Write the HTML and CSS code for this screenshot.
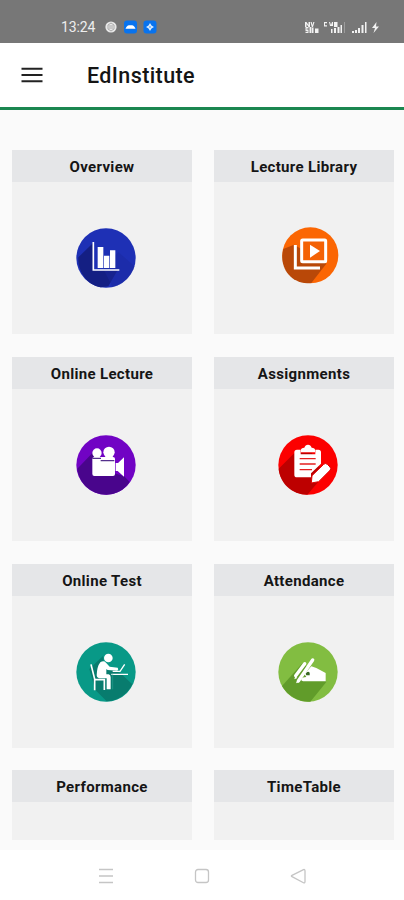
FILE: index.html
```html
<!DOCTYPE html>
<html lang="en">
<head>
<meta charset="utf-8">
<title>EdInstitute</title>
<link rel="stylesheet" href="styles.css">
</head>
<body>
<header class="status">
  <span class="time">13:24</span>
  <svg class="notices" width="54" height="14" viewBox="0 0 54 14">
    <circle cx="6" cy="7" r="5.6" fill="#e8e8e8"/>
    <path d="M3 5l3-2 3 2v4l-3 2-3-2zM4 6h4M4 8h4" fill="none" stroke="#999" stroke-width=".8"/>
    <rect x="19" y=".5" width="13" height="13" rx="3" fill="#0873ee"/>
    <path d="M20.5 8.800c1-2.400 2-3.600 3.500-3.600h3c1.500 0 2.500 1.200 3.500 3.600z" fill="#fff"/>
    <rect x="38.500" y=".5" width="13" height="13" rx="3" fill="#0873ee"/>
    <path d="M45 3l1.500 2.500L49 7l-2.500 1.500L45 11l-1.500-2.500L41 7l2.500-1.500z" fill="#d8ebff"/>
    <circle cx="45" cy="7" r=".7" fill="#0873ee"/>
  </svg>
  <svg class="signals" width="76" height="14" viewBox="0 0 76 14" fill="#f2f2f2">
    <path d="M1 2h1.500l2 3V2H6v5H4.500l-2-3v3H1zM6.500 2h1.200l.8 3 .8-3h1.200L9 7H7.800zM1.500 7h3v1.500h-2v1h2V13h-3v-1.200h2v-.8h-2zM5.500 7h2v6h-2zM8 7.500h1.500V13H8zM11 8.500h3.500V13H11z"/>
    <path d="M20 2h3v1.200h-2v2h2v1.200h-3zM25 2h1l1 3 1-3h1v4h-3zM30 2h3.500v5H30zM27 9h1.500v4H27zM30 8h2v5h-2zM33.500 7h2v6h-2zM36.500 5h1.500v8h-1.500z"/>
    <path d="M40 2h1v11h-1z" opacity=".3"/>
    <path d="M48 11h2v2h-2zM51 10h2v3h-2zM54 8h2v5h-2zM57.500 5h2v8h-2zM61 2h1.500v11H61z"/>
    <path d="M72.500 2L68 8h3l-1.500 5 5.500-6.500h-3z"/>
  </svg>
</header>
<div class="appbar">
  <svg width="22" height="16" viewBox="0 0 22 16"><path d="M.5 1.800h21M.5 8h21M.5 14.200h21" stroke="#222" stroke-width="2"/></svg>
  <h1>EdInstitute</h1>
</div>
<main class="grid">
  <section class="card">
    <h2>Overview</h2>
    <svg class="icon" viewBox="0 0 240 240">
      <circle cx="120" cy="120" r="89" fill="#1e30b5"/>
      <path d="M82 74L37 118C35 160 62 200 104 208l23-3 28-49L82 157z" fill="#141f83"/>
      <path d="M112 154l45-52 49 43c-12 33-35 55-66 63z" fill="#1a299e" opacity=".45"/>
      <path d="M82 72v84h78" fill="none" stroke="#fff" stroke-width="5"/>
      <path d="M95 87h17v63H95zM114 113h16v37h-16zM132 97h16v53h-16z" fill="#fff"/>
    </svg>
  </section>
  <section class="card">
    <h2>Lecture Library</h2>
    <svg class="icon" viewBox="0 0 240 240">
      <circle cx="127" cy="112" r="84" fill="#fb6603"/>
      <path d="M78 80L46 93c-13 45 12 99 72 103l12-1 45-58z" fill="#b94808"/>
      <rect x="101" y="66" width="72" height="65" fill="#f46205"/>
      <path d="M82 81v69h74" fill="none" stroke="#fff" stroke-width="9"/>
      <rect x="101" y="66" width="72" height="65" rx="3" fill="none" stroke="#fff" stroke-width="9"/>
      <path d="M126 80l30 19-30 20z" fill="#fff"/>
    </svg>
  </section>
  <section class="card">
    <h2>Online Lecture</h2>
    <svg class="icon" viewBox="0 0 240 240">
      <circle cx="120" cy="120" r="89" fill="#7103c4"/>
      <path d="M80 83l-46 48c4 43 42 78 88 78 28-1 53-14 69-38l-17-18-30-8z" fill="#49058c"/>
      <circle cx="93" cy="84" r="14" fill="#fff"/><circle cx="129" cy="82" r="17" fill="#fff"/>
      <rect x="79" y="96" width="68" height="57" rx="6" fill="#fff"/>
      <path d="M149 114h7l18-17v58l-19-17h-6z" fill="#fff"/>
      <path d="M79 100h26M104 107h41" stroke="#54308c" stroke-width="4"/>
    </svg>
  </section>
  <section class="card">
    <h2>Assignments</h2>
    <svg class="icon" viewBox="0 0 240 240">
      <circle cx="120" cy="120" r="89" fill="#fc0000"/>
      <path d="M80 83l-48 48c3 42 39 78 86 78l50-58-37-68z" fill="#bd0000"/>
      <path d="M87 74h11v14h44V74h9q8 0 8 8v34l-30 29v12H87q-8 0-8-8V82q0-8 8-8z" fill="#fff"/>
      <path d="M99 82v-8q0-5 10-6 3-9 11-9t11 9q10 1 10 6v8z" fill="#fff"/>
      <path d="M95 101h48M95 117h48M95 134h37" stroke="#e52020" stroke-width="4"/>
      <path d="M132 152l35-34q5-5 11 0l8 8q5 5 0 10l-34 34-22 4z" fill="#fff" stroke="#e00000" stroke-width="3"/>
    </svg>
  </section>
  <section class="card">
    <h2>Online Test</h2>
    <svg class="icon" viewBox="0 0 240 240">
      <circle cx="120" cy="120" r="89" fill="#089987"/>
      <path d="M111 72L70 111l18 63 34 34c31 0 63-21 77-51l-33-31-22-13-29 2z" fill="#087c6e"/>
      <circle cx="127" cy="78" r="13" fill="#fff"/>
      <path d="M103 91q10-7 17 1l11 12 24 3q4 5-1 9l-29-2-4-3v16h7q6 1 6 9v36h-12v-33H99q-7-1-7-9 1-27 11-39z" fill="#fff"/>
      <path d="M75 97l11 44v34M86 143h29v31" fill="none" stroke="#fff" stroke-width="5"/>
      <path d="M136 127h50M140 118h22l14-21" fill="none" stroke="#fff" stroke-width="4"/>
      <path d="M140 127v45" stroke="#29a192" stroke-width="2"/>
    </svg>
  </section>
  <section class="card">
    <h2>Attendance</h2>
    <svg class="icon" viewBox="0 0 240 240">
      <circle cx="120" cy="120" r="89" fill="#82bd41"/>
      <path d="M103 94l-61 68c19 31 48 48 85 47l48-59z" fill="#619c2a"/>
      <path d="M83 131l27-36M91 147l43-63" stroke="#fff" stroke-width="10" stroke-linecap="round"/>
      <path d="M130 103l15 5 28 15v25h-58q-18 1-15-7 3-6 15-6l-6-9z" fill="#fff"/>
      <path d="M113 125q6-9 12-3v8h-10z" fill="#376724"/>
      <path d="M82 132l-3 10 9-4zM88 144l-4 10 10-4z" fill="#fff"/>
    </svg>
  </section>
  <section class="card"><h2>Performance</h2></section>
  <section class="card"><h2>TimeTable</h2></section>
</main>
<nav class="nav">
  <svg viewBox="0 0 16 16"><path d="M1 1.500h14M1 8h14M1 14.500h14"/></svg>
  <svg viewBox="0 0 16 16"><rect x="1.500" y="1.500" width="13" height="13" rx="2.500"/></svg>
  <svg viewBox="0 0 16 16"><path d="M13.500 1.700Q15 1 15 3v10.500q0 2-1.500 1.200L2 8.700q-1.200-.7 0-1.400z"/></svg>
</nav>
</body>
</html>
```
FILE: styles.css
```css
* { box-sizing: border-box; }
body {
  margin: 0;
  height: 900px;
  overflow: hidden;
  display: flex;
  flex-direction: column;
  background: #fafafa;
  color: #151515;
  font-family: Roboto, sans-serif;
}
.status {
  height: 43px;
  flex: none;
  display: flex;
  align-items: flex-start;
  padding: 19px 24px 0 61px;
  background: #777;
  color: #eee;
}
.time {
  width: 44px;
  font-size: 14px;
  line-height: 16px;
  letter-spacing: -0.1px;
}
.signals { margin-left: auto; }
.notices, .signals { margin-top: 1px; }
.appbar {
  height: 67px;
  flex: none;
  display: flex;
  align-items: center;
  padding: 0 0 1px 21px;
  border-bottom: 3px solid #1b8750;
  background: #fff;
}
h1 {
  margin: 2px 0 0 44px;
  font-size: 21.5px;
  line-height: 28px;
  font-weight: 500;
  letter-spacing: 0.4px;
}
.grid {
  height: 740px;
  flex: none;
  display: grid;
  grid-template-columns: 180px 180px;
  grid-template-rows: repeat(3, 184px) 70px;
  gap: 22.800px 22px;
  align-content: start;
  padding: 40px 0 0 12px;
}
.card { background: #f1f1f1; }
h2 {
  margin: 0;
  height: 32px;
  background: #e5e6e8;
  font-size: 15px;
  line-height: 34px;
  font-weight: 700;
  letter-spacing: 0.33px;
  text-align: center;
}
.icon {
  display: block;
  width: 80px;
  height: 80px;
  margin: 36px 0 0 54px;
}
.nav {
  flex: 1;
  display: flex;
  justify-content: center;
  gap: 80px;
  padding-top: 18px;
  background: #fff;
}
.nav svg {
  width: 16px;
  height: 16px;
  fill: none;
  stroke: #c5c5c5;
  stroke-width: 1.3;
}
```
